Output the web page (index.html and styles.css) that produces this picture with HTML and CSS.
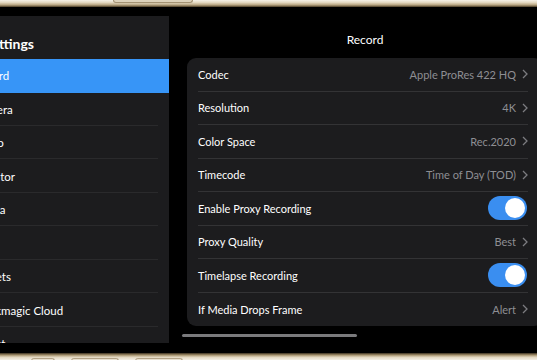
FILE: index.html
```html
<!DOCTYPE html>
<html lang="en">
<head>
  <meta charset="UTF-8" />
  <meta name="viewport" content="width=device-width, initial-scale=1.0"/>
  <title>Settings - Record</title>
  <link rel="stylesheet" href="styles.css">
</head>
<body>
  <div class="bezel bezel-top">
    <span class="bezel-button"></span>
  </div>

  <div class="screen">
    <aside class="sidebar">
      <div class="sidebar-inner">
        <h1 class="sidebar-title">Settings</h1>
        <ul class="menu">
          <li class="menu-item active">Record</li>
          <li class="menu-item">Camera</li>
          <li class="menu-item">Audio</li>
          <li class="menu-item">Monitor</li>
          <li class="menu-item">Media</li>
          <li class="menu-item">Chat</li>
          <li class="menu-item">Presets</li>
          <li class="menu-item">Blackmagic Cloud</li>
          <li class="menu-item">About</li>
        </ul>
      </div>
    </aside>

    <main class="detail">
      <h2 class="detail-title">Record</h2>
      <div class="card">
        <div class="row">
          <span class="label">Codec</span>
          <span class="value">Apple ProRes 422 HQ <svg class="chev" viewBox="0 0 6 10"><path d="M1 1l4 4-4 4"/></svg></span>
        </div>
        <div class="row">
          <span class="label">Resolution</span>
          <span class="value">4K <svg class="chev" viewBox="0 0 6 10"><path d="M1 1l4 4-4 4"/></svg></span>
        </div>
        <div class="row">
          <span class="label">Color Space</span>
          <span class="value">Rec.2020 <svg class="chev" viewBox="0 0 6 10"><path d="M1 1l4 4-4 4"/></svg></span>
        </div>
        <div class="row">
          <span class="label">Timecode</span>
          <span class="value">Time of Day (TOD) <svg class="chev" viewBox="0 0 6 10"><path d="M1 1l4 4-4 4"/></svg></span>
        </div>
        <div class="row">
          <span class="label">Enable Proxy Recording</span>
          <span class="toggle on"><span class="knob"></span></span>
        </div>
        <div class="row">
          <span class="label">Proxy Quality</span>
          <span class="value">Best <svg class="chev" viewBox="0 0 6 10"><path d="M1 1l4 4-4 4"/></svg></span>
        </div>
        <div class="row">
          <span class="label">Timelapse Recording</span>
          <span class="toggle on"><span class="knob"></span></span>
        </div>
        <div class="row">
          <span class="label">If Media Drops Frame</span>
          <span class="value">Alert <svg class="chev" viewBox="0 0 6 10"><path d="M1 1l4 4-4 4"/></svg></span>
        </div>
      </div>
      <div class="scrollbar"></div>
    </main>
  </div>

  <div class="bezel bezel-bottom">
    <span class="bezel-button small"></span>
    <span class="bezel-button mid"></span>
    <span class="bezel-button mid"></span>
  </div>
</body>
</html>
```

FILE: styles.css
```css
body {
  font-family: Lato, "Open Sans", sans-serif;
  background: #000;
  margin: 0;
  width: 537px;
  height: 360px;
  overflow: hidden;
  color: #fff;
}

.bezel {
  height: 7px;
  display: flex;
}

.bezel-top {
  background: linear-gradient(#f6f2e8 0%, #e4d9c2 35%, #b9a682 70%, #4a3c26 100%);
}

.bezel-top .bezel-button {
  margin-left: 113px;
  width: 78px;
  height: 2px;
  border: 1px solid #a39273;
  border-top: none;
  border-radius: 0 0 3px 3px;
  background: #ddd2bb;
}

.bezel-bottom {
  background: linear-gradient(#3a2f1e 0%, #a8946e 30%, #e2d7c0 60%, #f4efe5 100%);
  gap: 16px;
  padding-left: 31px;
}

.bezel-bottom .bezel-button {
  margin-top: 5px;
  height: 2px;
  border: 1px solid #b3a387;
  border-bottom: none;
  border-radius: 3px 3px 0 0;
  background: #e8e0cf;
}

.bezel-bottom .small { width: 22px; }
.bezel-bottom .mid { width: 46px; }

.screen {
  height: 346px;
  display: flex;
  overflow: hidden;
}

/* sidebar */
.sidebar {
  width: 169px;
  flex-shrink: 0;
  margin-top: 9px;
  height: 327px;
  background: #1c1c1e;
  overflow: hidden;
}

.sidebar-inner {
  margin-left: -26px;
}

.sidebar-title {
  margin: 0;
  height: 43px;
  line-height: 55px;
  font-size: 14px;
  font-weight: 700;
  padding-left: 10px;
}

.menu {
  list-style: none;
  margin: 0;
  padding: 0;
}

.menu-item {
  height: 33.5px;
  line-height: 33px;
  font-size: 11.5px;
  box-sizing: border-box;
}

.menu-item::after {
  content: "";
  display: block;
  height: 1px;
  background: #2a2a2c;
  margin-right: 11px;
  margin-top: -1px;
}

.menu-item.active {
  background: #3795f7;
}

.menu-item.active::after {
  display: none;
}

/* detail */
.detail {
  width: 392px;
  flex-shrink: 0;
}

.detail-title {
  margin: 25px 0 10px;
  height: 16px;
  line-height: 16px;
  text-align: center;
  font-size: 12px;
  font-weight: 400;
}

.card {
  margin: 0 18px;
  background: #1c1c1e;
  border-radius: 9px;
}

.row {
  height: 33.5px;
  box-sizing: border-box;
  margin: 0 15px 0 11px;
  display: flex;
  align-items: center;
  justify-content: space-between;
  border-bottom: 1px solid #333335;
  font-size: 11px;
}

.row:last-child {
  border-bottom: none;
}

.value {
  color: #8e8e93;
  display: flex;
  align-items: center;
  gap: 6px;
}

.chev {
  width: 6px;
  height: 10px;
  fill: none;
  stroke: #7c7c80;
  stroke-width: 1.3;
}

.toggle {
  width: 39px;
  height: 24px;
  border-radius: 12px;
  background: #3a8ef0;
  display: flex;
  align-items: center;
  justify-content: flex-end;
  padding: 0 2px;
  box-sizing: border-box;
  margin-right: 1px;
}

.knob {
  width: 20px;
  height: 20px;
  border-radius: 50%;
  background: #fff;
}

.scrollbar {
  margin: 8px 0 0 13px;
  width: 175px;
  height: 3px;
  border-radius: 2px;
  background: #7a7a7c;
}
```
